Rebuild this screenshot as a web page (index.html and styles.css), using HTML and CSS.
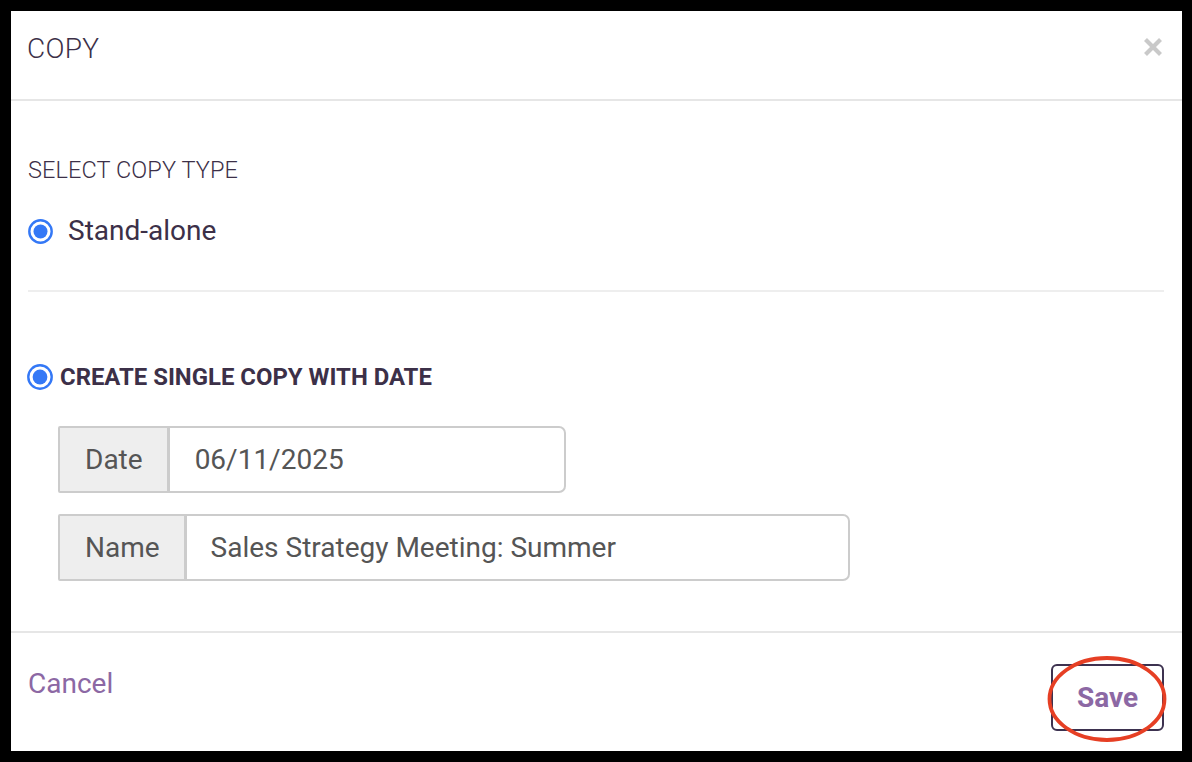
FILE: index.html
```html
<!DOCTYPE html>
<html>
<head>
<meta charset="utf-8">
<link rel="stylesheet" href="styles.css">
</head>
<body>
<div class="dialog">
  <div class="header">
    <div class="title">COPY</div>
    <button class="close" aria-label="Close">
      <svg width="20" height="20" viewBox="0 0 20 20"><path d="M2.5 2.5 L17.5 17.5 M17.5 2.5 L2.5 17.5" stroke="#c9c9c9" stroke-width="4.2" stroke-linecap="butt"/></svg>
    </button>
  </div>
  <div class="body">
    <div class="section-label">SELECT COPY TYPE</div>
    <label class="radio-row">
      <svg class="radio" width="25" height="25" viewBox="0 0 25 25"><circle cx="12.5" cy="12.5" r="11.2" fill="#fff" stroke="#3478f6" stroke-width="2.4"/><circle cx="12.5" cy="12.5" r="7" fill="#3478f6"/></svg>
      <span class="radio-text">Stand-alone</span>
    </label>
    <div class="divider"></div>
    <label class="radio-row2">
      <svg class="radio" width="26" height="26" viewBox="0 0 26 26"><circle cx="13" cy="13" r="11.7" fill="#fff" stroke="#3478f6" stroke-width="2.4"/><circle cx="13" cy="13" r="7.4" fill="#3478f6"/></svg>
      <span class="radio-bold">CREATE SINGLE COPY WITH DATE</span>
    </label>
    <div class="group date-group">
      <span class="addon">Date</span>
      <span class="field date-field">06/11/2025</span>
    </div>
    <div class="group name-group">
      <span class="addon">Name</span>
      <span class="field name-field">Sales Strategy Meeting: Summer</span>
    </div>
  </div>
  <div class="footer">
    <a class="cancel">Cancel</a>
    <div class="save-wrap">
      <button class="save">Save</button>
      <svg class="ring" width="122" height="90" viewBox="0 0 122 90"><ellipse cx="61" cy="45" rx="57.5" ry="41" fill="none" stroke="#e63f24" stroke-width="3.8"/></svg>
    </div>
  </div>
</div>
</body>
</html>
```
FILE: styles.css
```css
* { box-sizing: border-box; }
html, body { margin: 0; padding: 0; }
body {
  background: #000;
  padding: 11px 10px 11px 11px;
  font-family: Roboto, "Liberation Sans", sans-serif;
  color: #3c3048;
  width: 1192px;
  height: 762px;
  overflow: hidden;
}
.dialog {
  background: #fff;
  width: 1171px;
  height: 740px;
  display: flex;
  flex-direction: column;
}
.header {
  height: 90px;
  border-bottom: 2px solid #e6e6e6;
  display: flex;
  justify-content: space-between;
  align-items: flex-start;
  padding: 22px 19px 0 16px;
}
.title {
  font-size: 28px;
  font-weight: 300;
  line-height: 32px;
  letter-spacing: 0.3px;
}
.close {
  border: 0;
  background: none;
  padding: 0;
  margin-top: 4px;
  width: 20px;
  height: 20px;
  display: block;
}
.close svg { display: block; }
.body {
  padding: 56px 18px 0 17px;
  height: 532px;
  border-bottom: 2px solid #e6e6e6;
}
.section-label {
  font-size: 23.5px;
  font-weight: 300;
  line-height: 26px;
  letter-spacing: 0.1px;
}
.radio-row {
  display: flex;
  align-items: center;
  margin-top: 32px;
  height: 32px;
}
.radio-row .radio { margin-left: 0; margin-right: 15px; display: block; }
.radio-text {
  font-size: 28px;
  line-height: 32px;
}
.divider {
  height: 2px;
  background: #eeeeee;
  margin-top: 43px;
}
.radio-row2 {
  display: flex;
  align-items: center;
  margin-top: 71px;
  height: 28px;
}
.radio-row2 .radio { margin-left: -1px; margin-right: 7px; display: block; }
.radio-bold {
  font-size: 23.9px;
  font-weight: 700;
  line-height: 28px;
}
.group {
  display: flex;
  height: 67px;
  margin-left: 30px;
  border: 2px solid #cccccc;
  border-radius: 2px 7px 7px 2px;
  overflow: hidden;
}
.date-group { margin-top: 35px; width: 508px; }
.name-group { margin-top: 21px; width: 792px; }
.addon {
  background: #eeeeee;
  border-right: 3px solid #cccccc;
  padding: 0 24px 0 25px;
  display: flex;
  align-items: center;
  font-size: 28px;
  color: #555;
}
.field {
  display: flex;
  align-items: center;
  font-size: 28px;
  color: #555;
  flex: 1;
}
.date-field { padding-left: 25px; }
.name-field { padding-left: 24px; }
.footer {
  flex: 1;
  display: flex;
  justify-content: space-between;
  align-items: flex-start;
  padding: 0 18px 0 17px;
}
.cancel {
  font-size: 28px;
  line-height: 32px;
  color: #8c68a4;
  margin-top: 35px;
}
.save-wrap {
  position: relative;
  margin-top: 31px;
}
.save {
  width: 113px;
  height: 67px;
  border: 2px solid #3d3250;
  border-radius: 6px;
  background: #fff;
  font-family: Roboto, "Liberation Sans", sans-serif;
  font-size: 28px;
  font-weight: 700;
  color: #8c68a4;
  padding: 0;
  display: block;
}
.ring {
  position: absolute;
  left: -5px;
  top: -10px;
  pointer-events: none;
}
```
